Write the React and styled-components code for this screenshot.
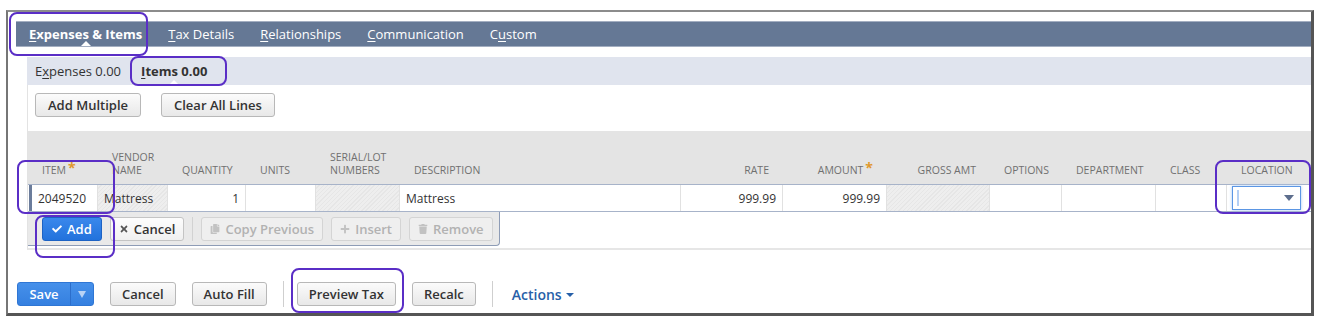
import React from 'react';
import styled, { createGlobalStyle } from 'styled-components';
import { FaCheck, FaTimes, FaCopy, FaPlus, FaTrash } from 'react-icons/fa';

const GlobalStyle = createGlobalStyle`
  body {
    margin: 0;
    background: #ffffff;
    font-family: "Open Sans", "Liberation Sans", sans-serif;
  }
`;

const Page = styled.div`
  position: relative;
  width: 1324px;
  height: 326px;
  padding: 10px 0 0 6px;
  box-sizing: border-box;
`;

const Frame = styled.div`
  width: 1308px;
  height: 306px;
  box-sizing: border-box;
  border-top: 2px solid #8c8c8c;
  border-left: 2px solid #767676;
  border-right: 3px solid #555;
  border-bottom: 3px solid #555;
  padding: 9px 0 0 8px;
  display: flex;
  flex-direction: column;
`;

const TabBar = styled.div`
  height: 26px;
  box-sizing: border-box;
  background: #657895;
  border-top: 1px solid #a3aec1;
  border-bottom: 1px solid #a3aec1;
  display: flex;
  align-items: stretch;
  gap: 26px;
  padding-left: 13px;
  color: #fff;
  font-size: 13px;
`;

const Tab = styled.div`
  position: relative;
  display: flex;
  align-items: center;
  font-weight: ${p => (p.$active ? 700 : 400)};
  u { text-underline-offset: 2px; }
  ${p => p.$active && `
    &::after {
      content: '';
      position: absolute;
      left: 50%;
      bottom: 0;
      transform: translateX(-50%);
      border-left: 5px solid transparent;
      border-right: 5px solid transparent;
      border-bottom: 5px solid #fff;
    }
  `}
`;

const SubPanel = styled.div`
  margin: 10px 0 0 11px;
  display: flex;
  flex-direction: column;
`;

const SubTabBar = styled.div`
  height: 28px;
  background: #e0e4ee;
  display: flex;
  align-items: stretch;
  gap: 20px;
  padding-left: 8px;
  color: #333;
  font-size: 13px;
`;

const SubTab = styled(Tab)`
  color: #333;
`;

const Body = styled.div`
  border-left: 1px solid #e3e3e3;
  border-bottom: 2px solid #e6e6e6;
  padding: 8px 0 2px;
`;

const ButtonRow = styled.div`
  display: flex;
  align-items: center;
  gap: 20px;
  padding-left: 7px;
`;

const GrayButton = styled.button`
  height: 24px;
  box-sizing: border-box;
  padding: 0 12px;
  border: 1px solid #b8b8b8;
  border-radius: 3px;
  background: linear-gradient(#fbfbfb, #e8e8e8);
  color: #333;
  font-family: inherit;
  font-size: 13px;
  font-weight: 600;
  display: flex;
  align-items: center;
  gap: 5px;
  svg { font-size: 10px; color: #555; }
`;

const FooterButton = styled(GrayButton)`
  padding: 0 11px;
`;

const columns = '70px 70px 78px 70px 84px 281px 102px 104px 103px 72px 94px 71px 84px';

const HeaderRow = styled.div`
  margin-top: 14px;
  height: 53px;
  background: #e4e4e4;
  display: grid;
  grid-template-columns: ${columns};
`;

const HeaderCell = styled.div`
  display: flex;
  flex-direction: column;
  justify-content: flex-end;
  align-items: ${p => (p.$right ? 'flex-end' : 'flex-start')};
  padding: 0 14px 7px 14px;
  font-size: 10.5px;
  line-height: 13px;
  color: #707070;
  text-transform: uppercase;
  white-space: nowrap;
`;

const Required = styled.span`
  color: #e0982c;
  font-size: 14px;
  font-weight: 700;
  line-height: 8px;
  margin-left: 2px;
  vertical-align: top;
`;

const LineRow = styled.div`
  height: 28px;
  box-sizing: border-box;
  border-top: 1px solid #a7b3c9;
  border-bottom: 1px solid #a7b3c9;
  display: grid;
  grid-template-columns: ${columns};
`;

const hatch = 'repeating-linear-gradient(135deg, #eeeeee 0 2px, #e6e6e6 2px 3px)';

const Cell = styled.div`
  display: flex;
  align-items: center;
  justify-content: ${p => (p.$right ? 'flex-end' : 'flex-start')};
  padding: 0 6px;
  border-right: 1px solid #e1e1e1;
  background: ${p => (p.$locked ? hatch : '#fff')};
  font-size: 12px;
  color: #333;
`;

const ItemCell = styled(Cell)`
  margin-left: 1px;
  border-left: 3px solid #6b7c9b;
`;

const LocationCell = styled(Cell)`
  padding: 0 10px 0 5px;
  border-right: none;
`;

const Select = styled.div`
  flex: 1;
  height: 24px;
  box-sizing: border-box;
  border: 1px solid #5b96e4;
  box-shadow: 0 0 3px #a4c7f4;
  display: flex;
  align-items: center;
  justify-content: space-between;
  padding: 0 6px 0 4px;
`;

const Caret = styled.span`
  width: 2px;
  height: 16px;
  background: #b3cff5;
`;

const DownArrow = styled.span`
  border-left: 5px solid transparent;
  border-right: 5px solid transparent;
  border-top: 6px solid #5d6e8d;
`;

const MachineBar = styled.div`
  width: 472px;
  height: 34px;
  box-sizing: border-box;
  background: #e9e9e9;
  border-right: 1px solid #8e9cb6;
  border-bottom: 1px solid #8e9cb6;
  border-bottom-right-radius: 4px;
  display: flex;
  align-items: center;
  gap: 8px;
  padding-left: 14px;
`;

const AddButton = styled(GrayButton)`
  padding: 0 9px;
  border-color: #1c62c4;
  background: linear-gradient(#3a88ec, #2272dc);
  color: #fff;
  svg { color: #fff; }
`;

const SmallButton = styled(GrayButton)`
  padding: 0 8px;
  background: ${p => (p.disabled ? '#efefef' : 'linear-gradient(#fdfdfd, #f0f0f0)')};
  border-color: ${p => (p.disabled ? '#d4d4d4' : '#c4c4c4')};
  color: ${p => (p.disabled ? '#b2b2b2' : '#333')};
  svg { color: ${p => (p.disabled ? '#c2c2c2' : '#555')}; }
`;

const Divider = styled.span`
  width: 1px;
  height: ${p => p.$h || 24}px;
  background: ${p => p.$c || '#cfcfcf'};
  margin-right: ${p => p.$mr || 0}px;
`;

const Footer = styled.div`
  margin-top: 31px;
  padding-left: 1px;
  display: flex;
  align-items: center;
  gap: 16px;
`;

const SaveButton = styled.div`
  height: 24px;
  width: 77px;
  box-sizing: border-box;
  border: 1px solid #2f76d4;
  border-radius: 3px;
  background: linear-gradient(#4690ea, #3580e0);
  display: flex;
  align-items: stretch;
  color: #fff;
  font-size: 13px;
  font-weight: 600;
`;

const SavePart = styled.span`
  width: 52px;
  display: flex;
  align-items: center;
  justify-content: center;
  border-right: 1px solid #2c6ecb;
`;

const MenuPart = styled.span`
  flex: 1;
  display: flex;
  align-items: center;
  justify-content: center;
  &::before {
    content: '';
    border-left: 4px solid transparent;
    border-right: 4px solid transparent;
    border-top: 7px solid #b9d3f5;
  }
`;

const Actions = styled.span`
  margin-left: 4px;
  color: #2760a8;
  font-size: 14px;
  font-weight: 600;
  display: flex;
  align-items: center;
  gap: 4px;
  &::after {
    content: '';
    border-left: 4px solid transparent;
    border-right: 4px solid transparent;
    border-top: 4px solid #2760a8;
    margin-top: 2px;
  }
`;

const Annotation = styled.div`
  position: absolute;
  left: ${p => p.$x}px;
  top: ${p => p.$y}px;
  width: ${p => p.$w}px;
  height: ${p => p.$h}px;
  box-sizing: border-box;
  border: 2.5px solid #5a2ec6;
  border-radius: 8px;
  pointer-events: none;
`;

const headers = [
  { label: <>ITEM<Required>*</Required></> },
  { label: <>VENDOR<br />NAME</> },
  { label: 'QUANTITY' },
  { label: 'UNITS' },
  { label: <>SERIAL/LOT<br />NUMBERS</> },
  { label: 'DESCRIPTION' },
  { label: 'RATE', right: true },
  { label: <>AMOUNT<Required>*</Required></>, right: true },
  { label: 'GROSS AMT', right: true },
  { label: 'OPTIONS' },
  { label: 'DEPARTMENT' },
  { label: 'CLASS' },
  { label: 'LOCATION' },
];

const marks = [
  { x: 9, y: 12, w: 139, h: 44 },
  { x: 130, y: 56, w: 97, h: 30 },
  { x: 17, y: 160, w: 98, h: 54 },
  { x: 35, y: 215, w: 80, h: 43 },
  { x: 1215, y: 160, w: 96, h: 54 },
  { x: 291, y: 268, w: 113, h: 45 },
];

export default function App() {
  return (
    <Page>
      <GlobalStyle />
      <Frame>
        <TabBar>
          <Tab $active><span><u>E</u>xpenses &amp; Items</span></Tab>
          <Tab><span><u>T</u>ax Details</span></Tab>
          <Tab><span><u>R</u>elationships</span></Tab>
          <Tab><span><u>C</u>ommunication</span></Tab>
          <Tab><span>C<u>u</u>stom</span></Tab>
        </TabBar>

        <SubPanel>
          <SubTabBar>
            <SubTab><span>E<u>x</u>penses 0.00</span></SubTab>
            <SubTab $active><span><u>I</u>tems 0.00</span></SubTab>
          </SubTabBar>

          <Body>
            <ButtonRow>
              <GrayButton>Add Multiple</GrayButton>
              <GrayButton>Clear All Lines</GrayButton>
            </ButtonRow>

            <HeaderRow>
              {headers.map((h, i) => (
                <HeaderCell key={i} $right={h.right}><span>{h.label}</span></HeaderCell>
              ))}
            </HeaderRow>

            <LineRow>
              <ItemCell>2049520</ItemCell>
              <Cell $locked>Mattress</Cell>
              <Cell $right>1</Cell>
              <Cell />
              <Cell $locked />
              <Cell>Mattress</Cell>
              <Cell $right>999.99</Cell>
              <Cell $right>999.99</Cell>
              <Cell $locked />
              <Cell />
              <Cell />
              <Cell />
              <LocationCell>
                <Select>
                  <Caret />
                  <DownArrow />
                </Select>
              </LocationCell>
            </LineRow>

            <MachineBar>
              <AddButton><FaCheck />Add</AddButton>
              <SmallButton><FaTimes />Cancel</SmallButton>
              <Divider $c="#d2d2d2" />
              <SmallButton disabled><FaCopy />Copy Previous</SmallButton>
              <SmallButton disabled><FaPlus />Insert</SmallButton>
              <SmallButton disabled><FaTrash />Remove</SmallButton>
            </MachineBar>
          </Body>
        </SubPanel>

        <Footer>
          <SaveButton>
            <SavePart>Save</SavePart>
            <MenuPart />
          </SaveButton>
          <FooterButton>Cancel</FooterButton>
          <FooterButton>Auto Fill</FooterButton>
          <Divider $h={26} $mr={-3} />
          <FooterButton>Preview Tax</FooterButton>
          <FooterButton>Recalc</FooterButton>
          <Divider $h={26} $mr={-1} />
          <Actions>Actions</Actions>
        </Footer>
      </Frame>

      {marks.map((m, i) => (
        <Annotation key={i} $x={m.x} $y={m.y} $w={m.w} $h={m.h} />
      ))}
    </Page>
  );
}
